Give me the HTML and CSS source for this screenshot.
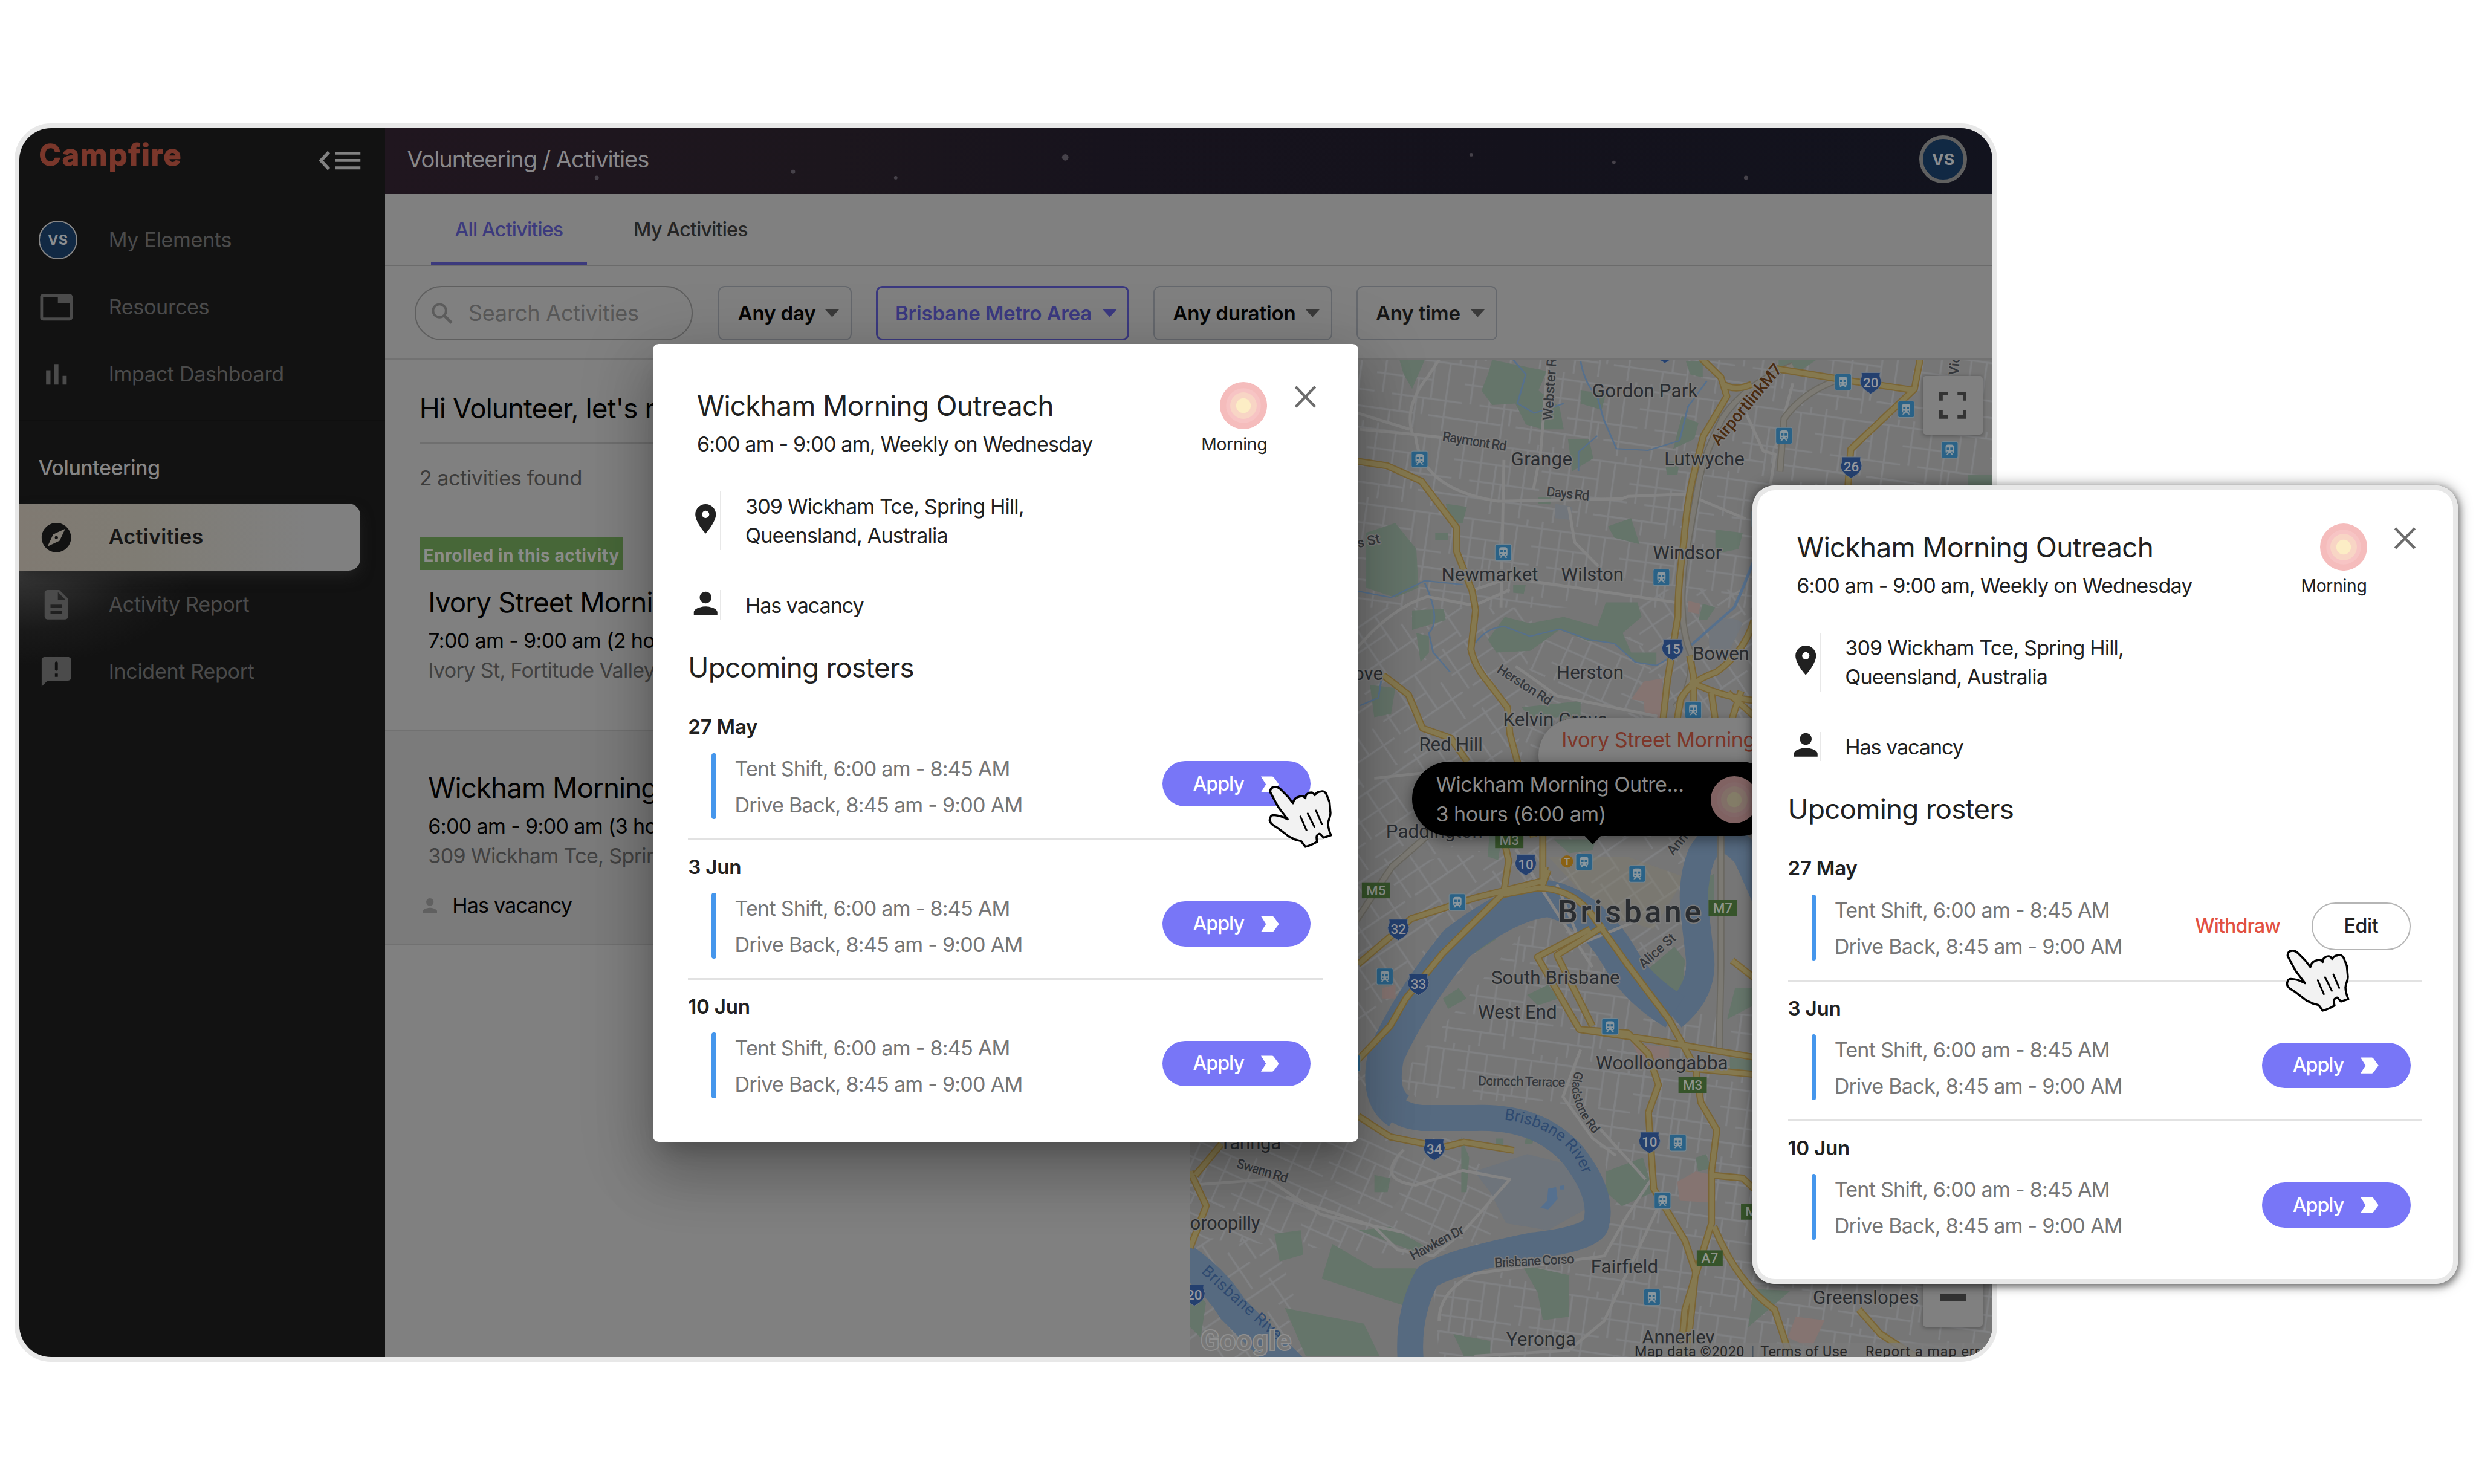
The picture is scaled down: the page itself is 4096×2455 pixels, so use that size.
FILE: index.html
```html
<!DOCTYPE html>
<html lang="en">
<head>
<meta charset="utf-8">
<title>Campfire – Volunteering</title>
<link rel="stylesheet" href="styles.css">
</head>
<body>
<svg width="0" height="0" class="defs" aria-hidden="true">
  <defs>
    <symbol id="pin" viewBox="0 0 24 24"><path d="M12 2C8.13 2 5 5.13 5 9c0 5.25 7 13 7 13s7-7.75 7-13c0-3.87-3.13-7-7-7zm0 9.5a2.5 2.5 0 1 1 0-5 2.5 2.5 0 0 1 0 5z"/></symbol>
    <symbol id="person" viewBox="0 0 24 24"><path d="M12 12c2.21 0 4-1.79 4-4s-1.79-4-4-4-4 1.79-4 4 1.79 4 4 4zm0 2c-2.67 0-8 1.34-8 4v2h16v-2c0-2.66-5.33-4-8-4z"/></symbol>
    <symbol id="sun" viewBox="0 0 80 80"><circle cx="40" cy="40" r="40" fill="#f5bcbc"/><circle cx="40" cy="40" r="29.5" fill="#f7c4c4"/><circle cx="40" cy="40" r="22.5" fill="#f8d5c5"/><circle cx="40" cy="40" r="12.5" fill="#fcedc5"/></symbol>
    <symbol id="close" viewBox="0 0 42 42"><path d="M4.500 4 37.500 38M37.500 4 4.500 38" stroke="#6c6c6c" stroke-width="4.500" fill="none"/></symbol>
    <symbol id="label" viewBox="0 0 32 28"><path d="M1 .5h18.500c1.500 0 2.500.5 3.400 1.800L31.500 14l-8.600 11.700c-.9 1.300-1.900 1.800-3.400 1.800H1L9.500 14z" fill="#fff"/></symbol>
    <symbol id="hand" viewBox="-4 -4 114 114">
      <path d="M9.600 1C4 1 1 5 1.600 10L15 35 31 56C25 53 20 50 14 49.500 8 48.500 4 48 2.500 51 0 55 0 59 2.500 62 5 66 11 68 16 72L33 85 43 90 54 93 61 102.500C68 101 76 97 81 94 80 89 79 84 82 82 85 79.500 87 80 88 83L92 87 104.400 83C102 77 99.500 70 99.600 63 100 56 104 52 103.600 45L102 27 97 14C95 9 91 7.500 87 8.700 82 9 79 11 77 15 75 11 72 9.500 68 10.700 64 12 61 15 61 20 59 17 56 15.500 52 17 46 18 41 22 40 28.600L32 18 19 5C16 2 13 1 9.600 1Z" fill="#f2f2f2" stroke="#000" stroke-width="3.600" stroke-linejoin="round"/>
      <path d="M52.600 51 63 74.500M65 46 76.500 69M79 41 89 64" stroke="#000" stroke-width="3" fill="none" stroke-linecap="round"/>
    </symbol>
  </defs>
</svg>

<div class="stage">
  <div class="app">
    <aside class="sidebar">
      <div class="brand">
        <svg class="logo" width="250" height="76" viewBox="0 0 250 76"><text x="0.500" y="43" class="logo-text" textLength="241" lengthAdjust="spacing">Campfire</text></svg>
        <svg class="burger" width="72" height="32" viewBox="0 0 72 32"><path d="M17.500 1.500 4 16l13.500 14.500" fill="none" stroke="#828282" stroke-width="5.500"/><path d="M28 1h43v5H28zM28 13.300h43v5H28zM28 26h43v5H28z" fill="#828282"/></svg>
      </div>
      <nav class="nav">
        <a class="item"><span class="avatar small">VS</span><span>My Elements</span></a>
        <a class="item"><svg class="ico" viewBox="0 0 24 24"><path d="M21 3H3c-1.100 0-2 .9-2 2v14c0 1.100.9 2 2 2h18c1.100 0 2-.9 2-2V5c0-1.100-.9-2-2-2zm0 16H3V5h10v4h8v10z"/></svg><span>Resources</span></a>
        <a class="item"><svg class="ico" viewBox="0 0 24 24"><path d="M5 9.200h3V19H5zM10.600 5h2.800v14h-2.800zM16.200 13H19v6h-2.800z"/></svg><span>Impact Dashboard</span></a>
      </nav>
      <div class="section">Volunteering</div>
      <nav class="nav glow">
        <a class="item active"><svg class="ico" viewBox="0 0 24 24"><path d="M12 10.900c-.61 0-1.100.49-1.100 1.100s.49 1.100 1.100 1.100c.61 0 1.100-.49 1.100-1.100s-.49-1.100-1.100-1.100zM12 2C6.480 2 2 6.480 2 12s4.480 10 10 10 10-4.480 10-10S17.520 2 12 2zm2.190 12.190L6 18l3.810-8.190L18 6l-3.810 8.190z"/></svg><span>Activities</span></a>
        <a class="item"><svg class="ico" viewBox="0 0 24 24"><path d="M14 2H6c-1.100 0-1.990.9-1.990 2L4 20c0 1.100.89 2 1.990 2H18c1.100 0 2-.9 2-2V8l-6-6zm2 16H8v-2h8v2zm0-4H8v-2h8v2zm-3-5V3.500L18.500 9H13z"/></svg><span>Activity Report</span></a>
        <a class="item"><svg class="ico" viewBox="0 0 24 24"><path d="M20 2H4c-1.100 0-2 .9-2 2v18l4-4h14c1.100 0 2-.9 2-2V4c0-1.100-.9-2-2-2zm-7 8.500c0 .4-.3.800-1 .8s-1-.4-1-.8V6c0-.6.400-1 1-1s1 .4 1 1zm0 2.700v2.300h-2v-2.300z" fill-rule="evenodd"/></svg><span>Incident Report</span></a>
      </nav>
    </aside>

    <main class="main">
      <header class="topbar">
        <svg class="stars" viewBox="653 217 2725 112" width="2725" height="112"><g fill="#46424a"><circle cx="1012" cy="301" r="3.500"/><circle cx="1345" cy="291" r="3.500"/><circle cx="1519" cy="301" r="3"/><circle cx="1806.500" cy="266.500" r="5.500"/><circle cx="2495" cy="262" r="3"/><circle cx="2737" cy="275" r="3"/><circle cx="2961" cy="301" r="3.500"/><circle cx="787" cy="274" r="3"/></g></svg>
        <span class="crumbs">Volunteering / Activities</span>
        <span class="avatar large">VS</span>
      </header>
      <div class="tabs"><span class="tab on">All Activities</span><span class="tab">My Activities</span></div>
      <div class="filters">
        <div class="search"><svg width="38" height="38" viewBox="0 0 38 38"><circle cx="14.500" cy="14.500" r="11" fill="none" stroke="#5c5c5c" stroke-width="4"/><path d="M22.500 22.500 35 35" stroke="#5c5c5c" stroke-width="5"/></svg><span>Search Activities</span></div>
        <div class="chip day"><span>Any day</span><i class="caret"></i></div>
        <div class="chip area"><span>Brisbane Metro Area</span><i class="caret"></i></div>
        <div class="chip duration"><span>Any duration</span><i class="caret"></i></div>
        <div class="chip time"><span>Any time</span><i class="caret"></i></div>
      </div>
      <div class="content">
        <section class="list">
          <h1 class="greeting">Hi Volunteer, let's r</h1>
          <div class="found">2 activities found</div>
          <article class="card">
            <span class="badge">Enrolled in this activity</span>
            <h2>Ivory Street Morning</h2>
            <p>7:00 am - 9:00 am (2 hours)</p>
            <p class="muted">Ivory St, Fortitude Valley</p>
          </article>
          <article class="card second">
            <h2>Wickham Morning</h2>
            <p>6:00 am - 9:00 am (3 hours)</p>
            <p class="muted">309 Wickham Tce, Spring</p>
            <div class="vacancy"><svg width="25" height="26" viewBox="4 4 16 16" preserveAspectRatio="none" fill="#606060"><use href="#person" width="24" height="24"/></svg><span>Has vacancy</span></div>
          </article>
        </section>
        <section class="map">
          <svg class="tiles" viewBox="2017 610 1361 1692" width="1361" height="1692">
            <defs>
              <pattern id="ga" width="150" height="128" patternUnits="userSpaceOnUse" patternTransform="rotate(8)"><path d="M0 12H150M0 44H96M30 76H150M0 104H70M96 104H150M14 0V76M46 12V104M72 44V128M96 12V76M122 12V128M138 0V12M30 104V128M84 76V104"/></pattern>
              <pattern id="gb" width="140" height="120" patternUnits="userSpaceOnUse" patternTransform="rotate(-34)"><path d="M0 10H140M0 46H88M20 80H140M12 0V80M50 10V120M88 10V80M118 46V120M0 110H50"/></pattern>
              <pattern id="gc" width="130" height="116" patternUnits="userSpaceOnUse" patternTransform="rotate(24)"><path d="M0 14H130M0 42H130M0 72H74M24 98H130M16 0V98M48 14V72M74 42V116M104 14V98"/></pattern>
            </defs>
            <rect x="2017" y="610" width="1361" height="1692" fill="#767676"/>
            <g class="mesh">
              <rect x="2300" y="610" width="1080" height="420" fill="url(#ga)"/>
              <path d="M2300 1030H2600L2560 1400 2300 1500Z" fill="url(#gb)"/>
              <path d="M2600 1080H2800V1420H2560Z" fill="url(#gc)"/>
              <path d="M2780 1000H3378V1400H2780Z" fill="url(#gb)"/>
              <path d="M2300 1480 2580 1430 2600 1500 2300 1860Z" fill="url(#gb)"/>
              <path d="M2560 1420H2880V1700L2640 1500Z" fill="url(#gb)"/>
              <path d="M2600 1560 2680 1560 2820 1750 2780 1880 2400 1860 2370 1830Z" fill="url(#ga)"/>
              <path d="M2780 1720H3378V2302H2440L2430 2180 2700 2130 2740 2040 2700 1900Z" fill="url(#ga)"/>
              <path d="M2017 1930H2460L2560 2020 2520 2110 2400 2130 2017 2100Z" fill="url(#gc)"/>
              <path d="M2017 2100 2160 2100 2230 2302 2017 2302Z" fill="url(#gb)"/>
            </g>
            <!-- parks and open ground, northern half -->
            <g transform="translate(2280 580) scale(.7143 .5485)">
              <g class="park">
                <path d="M350 55 480 90 460 150 510 200 520 270 470 270 430 255 405 190 350 195 325 150 340 100ZM130 55 190 55 160 145 140 100ZM50 590 120 560 170 640 175 760 120 790 50 760ZM620 805 695 805 705 850 660 900 680 960 740 960 740 1000 690 990 640 930 580 925 510 890 440 955 360 960 340 920 380 850 440 870 520 850 600 880ZM800 230 840 250 830 300 780 330ZM880 580 945 590 935 640 880 655ZM625 570 680 545 700 625 640 605ZM530 300 580 300 590 360 540 400ZM160 830 235 825 240 860 160 890ZM1030 55 1120 55 1080 90 1030 80ZM1480 410 1560 410 1560 460 1480 460ZM170 900 200 910 200 960 180 990ZM60 1060 120 1070 110 1150 70 1160ZM420 1130 560 1110 560 1160 440 1160ZM560 150 620 160 610 210 560 190ZM760 370 795 370 790 410 765 410ZM850 810 880 820 860 860 840 860ZM240 500 290 510 280 560 250 560ZM810 60 850 60 850 110 820 100ZM215 590 245 590 245 612 215 612ZM400 750 430 750 425 778 400 775ZM460 480 490 480 488 502 460 500Z"/>
              </g>
              <path d="M710 1050 755 1040 752 1165 712 1145 710 1110 680 1105ZM815 800 845 810 840 840 815 835Z" fill="#857471"/>
              <path d="M870 870Q920 840 945 870L900 990Q850 980 870 870ZM500 500 540 510 535 550 500 545Z" fill="#71767c"/>
              <g class="creek">
                <path d="M400 55 430 100 410 190 450 220 520 190M560 60Q570 130 600 170L615 240 645 330 720 335 795 305 815 200 860 120M310 930Q340 880 380 880L440 910 510 888 580 920 640 932 690 990 740 1000 780 970M30 770 110 790 190 738 280 750M190 745Q230 860 200 900L210 960 250 1020M35 1125 80 1100 90 1020M600 290 555 340 555 400"/>
                <path d="M970 680Q940 780 925 820L820 940" stroke-width="7"/>
              </g>
            </g>
            <!-- parks and open ground, southern half -->
            <g transform="translate(2000 1400) scale(.8929 .5867)">
              <path d="M560 1000 660 950 740 980 780 1050 770 1110 700 1170 620 1150 590 1060Z" fill="#6e747b"/>
              <path d="M700 1050 715 1045 718 1080 700 1110 685 1105 698 1085ZM722 1042 730 1040 730 1052 722 1052Z" fill="#55708f"/>
              <g class="park"><path d="M290 1210 370 1280 450 1280 430 1390 330 1340 270 1310ZM180 1180 230 1170 235 1240 190 1260ZM200 1395 350 1440 380 1535 240 1535ZM870 440 940 350 960 390 955 470 925 520 890 460ZM500 500 530 470 545 500 510 530ZM810 1000 880 960 900 1060 840 1100 810 1060ZM650 1270 740 1300 740 1420 690 1430 680 1350ZM590 0 615 0 605 100 585 90ZM710 40 790 40 785 70 740 80ZM1090 1340 1160 1345 1080 1450ZM1045 670 1090 680 1090 720 1045 715ZM1055 470 1090 470 1090 520 1040 560ZM620 860 680 870 680 900 640 890ZM600 905 615 905 615 935 600 935ZM660 890 675 890 670 920 655 920ZM370 1010 400 1020 395 1060 370 1060ZM535 900 550 960 545 1060 535 1060ZM20 1330 50 1380 40 1480 20 1450ZM540 360 590 300 600 330 560 370ZM660 490 700 460 720 500 680 520ZM980 960 1000 950 1010 990 985 1000ZM340 1170 400 1160 470 1220 460 1240ZM520 1470 590 1490 590 1535 540 1535ZM1000 150 1015 140 1015 250 1000 250ZM380 760 400 760 420 820 385 800Z"/></g>
              <path d="M945 1030 980 1000 1015 1010 1015 1090 950 1085ZM1170 1420 1225 1430 1200 1510 1155 1480ZM385 470 410 460 410 500 385 500ZM860 630 930 640 930 680 880 690Z" fill="#857471"/>
              <path d="M700 90 850 90 960 150 900 300 830 270 780 220Z" fill="#807c6c" opacity=".45"/>
            </g>
            <!-- the river narrows as it winds south -->
            <g class="river">
              <path stroke-width="48" d="M3010 1560Q2985 1500 2962 1450 2915 1395 2885 1450 2866 1500 2875 1560L2882 1620Q2890 1680 2836 1724"/>
              <path stroke-width="62" d="M2840 1716Q2780 1680 2750 1630 2700 1540 2625 1524 2560 1530 2470 1600 2390 1700 2350 1790 2335 1860 2372 1884"/>
              <path stroke-width="44" d="M2355 1868Q2370 1892 2410 1896L2500 1896Q2610 1892 2668 1960 2722 2030 2705 2080 2690 2102 2600 2112 2460 2140 2420 2165 2385 2230 2392 2310"/>
            </g>
            <path d="M2000 2130Q2060 2170 2090 2220L2190 2320" fill="none" stroke="#566a80" stroke-width="52"/>
            <!-- local collector roads -->
            <g class="collector">
              <path d="M2305 728 2390 736 2540 752M2395 736Q2380 690 2420 640L2440 610M2625 610 2612 770 2600 830M2300 700 2390 728M2400 740Q2410 830 2540 850L2750 846 2760 842 2860 838 2960 880M2500 1000 2560 980 2850 1023M2300 1100Q2360 1030 2420 1012L2500 1027 2560 1000M2550 780 2545 1030M2570 1130 2640 1180 2810 1215M2330 1320 2420 1310 2460 1290M2660 860 2670 920 2710 960M2960 700 2990 765 3010 770 2990 900M3040 650 3010 760"/>
              <path d="M2380 1950Q2330 2000 2400 2010L2480 1985 2560 2000 2480 2090 2430 2130 2370 2120 2330 2080 2180 2030M2017 2010 2150 2000 2240 2060 2380 2090M2440 2240Q2440 2190 2500 2160L2720 2130 2760 2060 2800 2000M2780 1560 2680 1600 2640 1500M2570 1440 2700 1640M2680 1780 2650 1860 2700 1930 2740 1960M2500 2300 2660 2290 2720 2240 2820 2030M2700 1900 2790 2000"/>
            </g>
            <!-- motorway tunnels -->
            <g class="tunnel">
              <path id="tun" class="edge" d="M3040 620Q2960 650 2920 710 2885 780 2878 830L2855 960Q2845 1060 2868 1110 2870 1170 2840 1200M2918 1400V1640L2915 1780M3130 640Q3060 660 3025 710L3018 800M2300 1560 2360 1470 2440 1400"/>
              <path d="M3040 620Q2960 650 2920 710 2885 780 2878 830L2855 960Q2845 1060 2868 1110 2870 1170 2840 1200M2918 1400V1640L2915 1780M3130 640Q3060 660 3025 710L3018 800M2300 1560 2360 1470 2440 1400"/>
            </g>
            <!-- arterial roads: casing, then fill -->
            <defs><g id="art">
              <path d="M2300 782 2352 790 2410 816 2470 895V936L2496 1002 2502 1035 2494 1101Q2500 1130 2524 1158L2556 1200 2560 1244 2575 1300 2600 1420M2345 1145 2388 1178 2412 1235 2460 1252 2488 1292M2885 608 2918 640 2928 672 2888 740 2873 800Q2860 850 2855 920 2845 990 2845 1046L2827 1156 2820 1219M3010 625 3138 646 3246 662M3256 608 3246 660 3138 762 3133 830M2920 650Q2940 665 2970 652M2865 1112 2872 1150V1190M2974 1052Q2958 1106 2910 1140 2866 1155 2850 1185L2844 1219M2865 1156Q2920 1182 2974 1188M2952 1172 2937 1219M2902 1175 2908 1219M2930 1175 2975 1215"/>
              <path d="M2545 1400 2558 1460 2550 1512M2616 1400V1500L2625 1476M2303 1635 2393 1558 2500 1523 2616 1494 2620 1470M2549 1517 2607 1506Q2661 1506 2696 1547L2759 1635 2830 1729 2875 1811 2884 1870 2911 1916 2902 1987V2075L2857 2221 2850 2302M2553 1511 2446 1617 2384 1693 2357 1740 2300 1800M2696 1576 2607 1623 2678 1746 2804 1764 2974 1793M2720 1570 2640 1620 2700 1740M2678 1746 2760 1752 2795 1787 2812 1840 2795 1887 2804 2016 2857 2104 2875 2157 2860 2302M2937 1629 2974 1658M2857 1811 2974 1822M2303 1893 2357 1928 2446 1946 2482 1937 2567 1951M2902 1993 2955 1998 2974 2016M2906 2080Q2945 2175 3009 2221L3036 2302M3152 2221 3188 2262 3250 2302M2018 1987 2045 2045 2018 2116M2071 1940 2027 1993"/>
            </g></defs>
            <use href="#art" class="art-edge"/>
            <use href="#art" class="art"/>

            <!-- suburb names -->
            <g class="names">
              <text x="2789" y="674" textLength="179">Gordon Park</text>
              <text x="2614" y="789" textLength="104">Grange</text>
              <text x="2890" y="789" textLength="136">Lutwyche</text>
              <text x="2861" y="948" textLength="117">Windsor</text>
              <text x="2526" y="985" textLength="164">Newmarket</text>
              <text x="2700" y="985" textLength="106">Wilston</text>
              <text x="2696" y="1151.500" textLength="114">Herston</text>
              <text x="2918" y="1120" textLength="96">Bowen</text>
              <text x="2637" y="1231" textLength="177">Kelvin Grove</text>
              <text x="2460" y="1273" textLength="108">Red Hill</text>
              <text x="2432" y="1421" textLength="164">Paddington</text>
              <text x="2320" y="1153">ove</text>
              <text x="2637.500" y="1669" textLength="218">South Brisbane</text>
              <text x="2573" y="1727" textLength="134">West End</text>
              <text x="2818" y="1814" textLength="224">Woolloongabba</text>
              <text x="2120" y="1949" textLength="104">Taringa</text>
              <text x="2077" y="2085" textLength="119">oroopilly</text>
              <text x="2754.500" y="2158.600" textLength="114">Fairfield</text>
              <text x="3164" y="2211" textLength="180">Greenslopes</text>
              <text x="2613" y="2282" textLength="118">Yeronga</text>
              <text x="2845.600" y="2279" textLength="123">Annerley</text>
              <text class="city" x="2763" y="1564" textLength="243">Brisbane</text>
            </g>
            <g class="streets">
              <text transform="translate(2636 654) rotate(-86)">Webster Rd</text>
              <text transform="translate(2499 756) rotate(9)" textLength="110">Raymont Rd</text>
              <text transform="translate(2658 845) rotate(6)" textLength="73">Days Rd</text>
              <text transform="translate(2581 1168) rotate(33)" textLength="106">Herston Rd</text>
              <text transform="translate(2322 925) rotate(-12)">s St</text>
              <text transform="translate(3322 620) rotate(-85)">Vid</text>
              <text transform="translate(2580 1842) rotate(1)" textLength="148">Dornoch Terrace</text>
              <text transform="translate(2138 1993) rotate(17)" textLength="90">Swann Rd</text>
              <text transform="translate(2440 2114) rotate(-28)" textLength="100">Hawken Dr</text>
              <text transform="translate(2602 2146) rotate(-3)" textLength="136">Brisbane Corso</text>
              <text transform="translate(2815 1618) rotate(-42)" textLength="76">Alice St</text>
              <text transform="translate(2850 1436) rotate(-50)">Ann</text>
              <path id="glad" d="M2671 1816Q2652 1866 2704 1925" fill="none" stroke="none"/>
              <text class="along"><textPath href="#glad" textLength="118">Gladstone Rd</textPath></text>
            </g>
            <text class="tunnel-name" transform="translate(2914 757) rotate(-50)" textLength="170">AirportlinkM7</text>
            <path id="rv" d="M2550 1899Q2656 1912 2684 1992" fill="none"/>
            <text class="water"><textPath href="#rv">Brisbane River</textPath></text>
            <text class="water" transform="translate(2036 2158) rotate(42)" textLength="182">Brisbane River</text>

            <!-- route shields -->
            <g class="shields">
              <g transform="translate(2836 1101)"><path d="M-16-17H16Q14-11 18-3 19 9 0 19-19 9-18-3-14-11-16-17Z"/><text y="8">15</text></g>
              <g transform="translate(3172 649)"><path d="M-16-17H16Q14-11 18-3 19 9 0 19-19 9-18-3-14-11-16-17Z"/><text y="8">20</text></g>
              <g transform="translate(3139 792)"><path d="M-16-17H16Q14-11 18-3 19 9 0 19-19 9-18-3-14-11-16-17Z"/><text y="8">26</text></g>
              <g transform="translate(2587 1466)"><path d="M-16-17H16Q14-11 18-3 19 9 0 19-19 9-18-3-14-11-16-17Z"/><text y="8">10</text></g>
              <g transform="translate(2371 1576)"><path d="M-16-17H16Q14-11 18-3 19 9 0 19-19 9-18-3-14-11-16-17Z"/><text y="8">32</text></g>
              <g transform="translate(2405 1669)"><path d="M-16-17H16Q14-11 18-3 19 9 0 19-19 9-18-3-14-11-16-17Z"/><text y="8">33</text></g>
              <g transform="translate(2432 1949)"><path d="M-16-17H16Q14-11 18-3 19 9 0 19-19 9-18-3-14-11-16-17Z"/><text y="8">34</text></g>
              <g transform="translate(2797 1937)"><path d="M-16-17H16Q14-11 18-3 19 9 0 19-19 9-18-3-14-11-16-17Z"/><text y="8">10</text></g>
              <g transform="translate(2025 2196)"><path d="M-16-17H16Q14-11 18-3 19 9 0 19-19 9-18-3-14-11-16-17Z"/><text y="8">20</text></g>
              <g transform="translate(2823 597)"><path d="M-16-17H16Q14-11 18-3 19 9 0 19-19 9-18-3-14-11-16-17Z"/></g>
            </g>
            <g class="motorways">
              <g transform="translate(2559 1425)"><rect x="-24" y="-13.500" width="48" height="27"/><text y="8">M3</text></g>
              <g transform="translate(2333 1510)"><rect x="-24" y="-13.500" width="48" height="27"/><text y="8">M5</text></g>
              <g transform="translate(2921 1540)"><rect x="-24" y="-13.500" width="48" height="27"/><text y="8">M7</text></g>
              <g transform="translate(2870 1840)"><rect x="-24" y="-13.500" width="48" height="27"/><text y="8">M3</text></g>
              <g transform="translate(2899 2134)"><rect x="-22" y="-13.500" width="44" height="27"/><text y="8">A7</text></g>
              <g transform="translate(2976 2055)"><rect x="-24" y="-13.500" width="48" height="27"/><text y="8">M3</text></g>
            </g>
            <defs><g id="train"><rect x="-14" y="-14" width="28" height="28" rx="3" fill="#2a6287" stroke="#75858e" stroke-width="1.200"/><path d="M-7-5q0-4 4-4h6q4 0 4 4v8q0 3-3 3l2.500 3h-3l-2-3h-3l-2 3h-3l2.500-3q-3 0-3-3z" fill="#8a979e"/><path d="M-5-4h4v4h-4zM1-4h4v4h-4zM-5 2.500h2.500v2h-2.500zM2.500 2.500h2.500v2h-2.500z" fill="#2a6287"/></g></defs>
            <use href="#train" x="2407" y="779"/><use href="#train" x="2549" y="937"/><use href="#train" x="2817" y="979"/><use href="#train" x="3125" y="648"/><use href="#train" x="3232" y="694"/><use href="#train" x="3025" y="739"/><use href="#train" x="3306" y="763"/><use href="#train" x="2871" y="1204"/><use href="#train" x="2686" y="1462"/><use href="#train" x="2776" y="1482"/><use href="#train" x="2471" y="1530"/><use href="#train" x="2348" y="1656"/><use href="#train" x="2730" y="1741"/><use href="#train" x="2845" y="1938"/><use href="#train" x="2819" y="2036"/><use href="#train" x="2801" y="2200"/><use href="#train" x="2984" y="880"/><use href="#train" x="2292" y="1803"/>
            <circle cx="2657" cy="1461" r="10.500" fill="#8a6114"/><text x="2657" y="1467" class="transit">T</text>
            <text x="2036" y="2289" class="google" textLength="153">Google</text>
            <rect x="2764" y="2278" width="614" height="24" fill="#7b7b7b" opacity=".8"/>
            <g class="legal"><text x="2771.500" y="2301" textLength="186">Map data ©2020</text><path d="M2972 2282V2302" stroke="#4a5560" stroke-width="2"/><text x="2985" y="2301" textLength="147">Terms of Use</text><text x="3163" y="2301" textLength="217">Report a map error</text></g>
          </svg>
          <div class="mapbtn full"><svg width="46" height="46" viewBox="0 0 46 46" fill="none" stroke="#333" stroke-width="6"><path d="M3 15V3H15M31 3H43V15M43 31V43H31M15 43H3V31"/></svg></div>
          <div class="mapbtn minus"><i></i></div>
          <div class="callout white">Ivory Street Morning</div>
          <div class="callout black">
            <div><div>Wickham Morning Outre...</div><div>3 hours (6:00 am)</div></div>
            <svg class="dim" width="80" height="80"><use href="#sun"/></svg>
          </div>
        </section>
      </div>
    </main>
  </div>

  <section class="modal one">
    <header class="head">
      <div class="titles"><h2>Wickham Morning Outreach</h2><p>6:00 am - 9:00 am, Weekly on Wednesday</p></div>
      <div class="when"><svg width="80" height="80"><use href="#sun"/></svg><span>Morning</span></div>
      <svg class="x" width="42" height="42"><use href="#close"/></svg>
    </header>
    <div class="fact where"><span class="mark"><svg width="60" height="60"><use href="#pin"/></svg></span><p>309 Wickham Tce, Spring Hill,<br>Queensland, Australia</p></div>
    <div class="fact room"><span class="mark"><svg width="60" height="60"><use href="#person"/></svg></span><p>Has vacancy</p></div>
    <h3>Upcoming rosters</h3>
    <div class="roster"><h4>27 May</h4><div class="shift"><div class="lines"><div>Tent Shift, 6:00 am - 8:45 AM</div><div>Drive Back, 8:45 am - 9:00 AM</div></div><button class="apply">Apply<svg width="32" height="28"><use href="#label"/></svg></button></div></div>
    <div class="roster"><h4>3 Jun</h4><div class="shift"><div class="lines"><div>Tent Shift, 6:00 am - 8:45 AM</div><div>Drive Back, 8:45 am - 9:00 AM</div></div><button class="apply">Apply<svg width="32" height="28"><use href="#label"/></svg></button></div></div>
    <div class="roster"><h4>10 Jun</h4><div class="shift"><div class="lines"><div>Tent Shift, 6:00 am - 8:45 AM</div><div>Drive Back, 8:45 am - 9:00 AM</div></div><button class="apply">Apply<svg width="32" height="28"><use href="#label"/></svg></button></div></div>
    <svg class="cursor" width="114" height="114"><use href="#hand"/></svg>
  </section>

  <section class="modal two">
    <header class="head">
      <div class="titles"><h2>Wickham Morning Outreach</h2><p>6:00 am - 9:00 am, Weekly on Wednesday</p></div>
      <div class="when"><svg width="80" height="80"><use href="#sun"/></svg><span>Morning</span></div>
      <svg class="x" width="42" height="42"><use href="#close"/></svg>
    </header>
    <div class="fact where"><span class="mark"><svg width="60" height="60"><use href="#pin"/></svg></span><p>309 Wickham Tce, Spring Hill,<br>Queensland, Australia</p></div>
    <div class="fact room"><span class="mark"><svg width="60" height="60"><use href="#person"/></svg></span><p>Has vacancy</p></div>
    <h3>Upcoming rosters</h3>
    <div class="roster"><h4>27 May</h4><div class="shift"><div class="lines"><div>Tent Shift, 6:00 am - 8:45 AM</div><div>Drive Back, 8:45 am - 9:00 AM</div></div><button class="withdraw">Withdraw</button><button class="edit">Edit</button></div></div>
    <div class="roster"><h4>3 Jun</h4><div class="shift"><div class="lines"><div>Tent Shift, 6:00 am - 8:45 AM</div><div>Drive Back, 8:45 am - 9:00 AM</div></div><button class="apply">Apply<svg width="32" height="28"><use href="#label"/></svg></button></div></div>
    <div class="roster"><h4>10 Jun</h4><div class="shift"><div class="lines"><div>Tent Shift, 6:00 am - 8:45 AM</div><div>Drive Back, 8:45 am - 9:00 AM</div></div><button class="apply">Apply<svg width="32" height="28"><use href="#label"/></svg></button></div></div>
    <svg class="cursor" width="114" height="114"><use href="#hand"/></svg>
  </section>
</div>
</body>
</html>
```
FILE: styles.css
```css
* { box-sizing: border-box; margin: 0; padding: 0; }
body { background: #fff; overflow: hidden; font-family: Inter, "Liberation Sans", sans-serif; }
h1, h2, h3 { font-weight: 400; }
button { font: inherit; border: 0; background: none; }
.defs { position: absolute; }

.stage { position: relative; width: 4199px; height: 2517px; zoom: 0.97547; overflow: hidden; padding: 209px 0 0 25px; font-size: 35px; letter-spacing: -0.8px; line-height: 50px; }

/* application frame */
.app { display: grid; grid-template-columns: 620px 2725px; width: 3362px; height: 2101px; border: 8.25px solid #e8e8e8; border-radius: 62px; overflow: hidden; background: #e8e8e8; }

.sidebar { background: #121212; color: #4b4b4b; display: flex; flex-direction: column; }
.brand { height: 133px; display: flex; align-items: flex-start; justify-content: space-between; padding: 21px 41px 0 32px; }
.logo-text { font: 700 50px Inter, sans-serif; fill: #7a372b; stroke: #7a372b; stroke-width: 1.5; stroke-linejoin: round; letter-spacing: 0; }
.burger { margin-top: 18px; }
.nav { display: flex; flex-direction: column; }
.item { height: 114px; display: flex; align-items: center; gap: 59px; padding-left: 32px; letter-spacing: -0.35px; }
.ico { width: 60px; height: 60px; fill: #4b4b4b; }
.avatar { display: flex; align-items: center; justify-content: center; border-radius: 50%; background: #112944; color: #8a8d90; font-weight: 700; }
.avatar.small { width: 66px; height: 66px; border: 2.1px solid #868686; margin-right: -6px; font-size: 24px; letter-spacing: 0.5px; }
.avatar.large { width: 81px; height: 81px; border: 6.2px solid #606060; margin-right: 42px; margin-top: -7px; font-size: 27px; letter-spacing: 0.5px; }
.section { margin-top: 20px; border-top: 2.1px solid #0f0f0f; height: 142px; display: flex; align-items: center; padding: 19px 0 0 32px; color: #868686; font-weight: 500; letter-spacing: -0.6px; }
.glow { background: radial-gradient(ellipse 300px 170px at 0 105px, #3a3a3a 0, #282828 35%, #191919 65%, #121212 100%); }
.active { width: 578px; border-radius: 0 20px 20px 0; background: linear-gradient(90deg, #807a72, #7f7c74 35%, #808080 85%); color: #161616; font-weight: 600; letter-spacing: 0.3px; box-shadow: 0 12px 26px -6px #262626; }
.active .ico { fill: #121212; }

.main { display: flex; flex-direction: column; background: #808080; overflow: hidden; }
.topbar { position: relative; height: 112px; flex: none; display: flex; align-items: center; justify-content: space-between; padding-left: 37px; background: linear-gradient(90deg, #20161f, #1c161d 28%, #17131d 45%, #14121c 70%, #12131e); }
.stars { position: absolute; inset: 0; }
.crumbs { position: relative; font-size: 39px; letter-spacing: -1.1px; color: #88878a; margin-top: -6px; }
.tabs { height: 122px; flex: none; display: flex; gap: 44px; padding-left: 78px; border-bottom: 2.1px solid #6b6b6b; }
.tab { width: 264px; height: 120px; display: flex; align-items: center; justify-content: center; padding-top: 2px; font-size: 33px; font-weight: 500; color: #252525; }
.tab.on { color: #3c3a7d; border-bottom: 5.2px solid #3c3a7d; padding-top: 7px; }
.filters { height: 159px; flex: none; display: flex; padding: 34px 0 0 50px; border-bottom: 2.1px solid #727272; }
.search { width: 472px; height: 92px; border: 2.1px solid #5f5f5f; border-radius: 46px; display: flex; align-items: center; padding-left: 26px; gap: 25px; font-size: 37px; letter-spacing: -0.2px; color: #575757; margin-right: 43px; }
.chip { height: 92px; border: 2.1px solid #65686d; border-radius: 11px; display: flex; align-items: center; justify-content: space-between; padding: 0 19px 0 31px; margin-right: 41px; font-weight: 600; font-size: 34px; letter-spacing: -0.2px; color: #050505; }
.chip.day { width: 226px; }
.chip.area { width: 430px; border: 3.1px solid #3b3980; padding: 0 18px 0 30px; color: #3b3980; }
.chip.duration { width: 303px; }
.chip.time { width: 239px; color: #161616; }
.caret { width: 24px; height: 13px; background: #3a3a3a; clip-path: polygon(0 0, 100% 0, 50% 100%); }
.area .caret { background: #3b3980; }

.content { display: grid; grid-template-columns: 1364px 1361px; height: 1692px; }
.list { overflow: hidden; color: #020202; white-space: nowrap; }
.greeting { margin-left: 58px; height: 142px; padding-top: 53px; border-bottom: 2.1px solid #6f6f6f; font-size: 47px; line-height: 60px; letter-spacing: -1px; }
.found { margin-left: 58px; padding-top: 34px; color: #3c3c3c; letter-spacing: -0.4px; }
.card { padding: 74px 0 75px 73px; border-bottom: 2.1px solid #717171; }
.card h2 { font-size: 47px; line-height: 60px; letter-spacing: -1px; margin: 25px 0 10px; }
.card p { letter-spacing: -0.7px; }
.muted { color: #414141; }
.badge { display: flex; align-items: center; justify-content: center; width: 346px; height: 57px; margin-left: -15px; padding-top: 8px; background: #476738; color: #8b8c89; font-weight: 700; font-size: 29px; letter-spacing: 0.45px; }
.second { background: #7b7b7b; padding: 67px 0 39px 73px; }
.second h2 { margin-top: 1px; }
.vacancy { margin: 34px 0 0 -10px; display: flex; align-items: center; gap: 26px; letter-spacing: -0.9px; }

/* map canvas */
.map { position: relative; overflow: hidden; background: #767676; }
.tiles { display: block; letter-spacing: 0; }
.mesh { stroke: none; }
pattern path { stroke: #808183; stroke-width: 3.2; fill: none; }
.park { fill: #65756a; }
.creek { fill: none; stroke: #56708d; stroke-width: 4; }
.river { fill: none; stroke: #566a80; stroke-linejoin: round; }
.collector { fill: none; stroke: #848484; stroke-width: 5; stroke-linejoin: round; }
.tunnel { fill: none; stroke: #7c7a74; stroke-width: 8; }
.tunnel .edge { stroke: #6b6962; stroke-width: 12; }
.art-edge { fill: none; stroke: #7b6534; stroke-width: 12; stroke-linejoin: round; }
.art { fill: none; stroke: #857950; stroke-width: 8; stroke-linejoin: round; }
.names text { font: 400 32px Roboto, sans-serif; text-anchor: middle; fill: #2a2d31; paint-order: stroke; stroke: #7c7c7c; stroke-width: 4; stroke-linejoin: round; }
.names .city { font-size: 53px; font-weight: 500; }
.streets text { font: 500 23px Roboto, sans-serif; text-anchor: middle; fill: #35383c; paint-order: stroke; stroke: #7c7c7c; stroke-width: 4; stroke-linejoin: round; }
.streets .along { text-anchor: start; font-size: 21px; }
.tunnel-name { font: 500 28px Roboto, sans-serif; fill: #4a2b10; text-anchor: start; paint-order: stroke; stroke: #7c7c7c; stroke-width: 4; }
.water { font: 400 27px Roboto, sans-serif; fill: #2f4a70; }
.shields path { fill: #24406f; stroke: #6f7987; stroke-width: 1; }
.shields text { font: 500 23px Roboto, sans-serif; fill: #95989e; text-anchor: middle; }
.motorways rect { fill: #36542a; }
.motorways text { font: 500 23px Roboto, sans-serif; fill: #8f958c; text-anchor: middle; }
.transit { font: 700 16px Roboto, sans-serif; fill: #9a958a; text-anchor: middle; }
.google { font: 500 46px Roboto, sans-serif; fill: #787878; stroke: #909090; stroke-width: 4; paint-order: stroke; }
.legal text { font: 400 24px Roboto, sans-serif; fill: #262626; }

.mapbtn { position: absolute; left: 1244px; width: 101px; height: 100px; background: #808080; border-radius: 5px; box-shadow: 0 2px 8px rgba(0, 0, 0, .3); display: flex; align-items: center; justify-content: center; }
.mapbtn.full { top: 27px; }
.mapbtn.minus { top: 1540px; }
.mapbtn i { width: 44px; height: 12px; background: #333; }
.callout { position: absolute; display: flex; align-items: center; letter-spacing: -0.5px; }
.callout.white { left: 592px; top: 608px; width: 640px; height: 126px; border-radius: 63px; padding: 0 0 51px 39px; background: #808080; color: #7d3629; box-shadow: 0 4px 16px rgba(0, 0, 0, .35); }
.callout.black { left: 378px; top: 682px; width: 620px; height: 126px; border-radius: 63px; padding: 2px 0 0 40px; gap: 46px; background: #000; color: #8a8a8a; letter-spacing: -0.5px; box-shadow: 0 6px 24px rgba(0, 0, 0, .45); }
.callout.black::after { content: ""; position: absolute; left: 292px; top: 125px; width: 28px; height: 15px; background: #000; clip-path: polygon(0 0, 100% 0, 50% 100%); }
.dim { opacity: .52; }

/* activity dialogs */
.modal { position: absolute; width: 1196px; height: 1354px; padding: 65px 60px 0; background: #fff; color: #212121; fill: #212121; letter-spacing: -0.88px; }
.modal.one { left: 1107px; top: 583px; border-radius: 10px; box-shadow: 0 27px 37px -17px rgba(0, 0, 0, .22), 0 60px 95px 7px rgba(0, 0, 0, .16), 0 22px 115px 20px rgba(0, 0, 0, .14); }
.modal.two { left: 2972px; top: 823px; border-radius: 38px; box-shadow: inset 0 0 0 8.25px #e8e8e8, 3px 5px 12px rgba(0, 0, 0, .4), 0 0 24px rgba(0, 0, 0, .4); }
.head { height: 131px; display: flex; align-items: flex-start; padding: 0 8px 0 15px; }
.titles { flex: 1; padding-top: 11px; white-space: nowrap; }
.titles h2 { font-size: 47px; line-height: 60px; letter-spacing: -0.7px; margin-bottom: 10px; }
.when { width: 112px; display: flex; flex-direction: column; align-items: flex-end; font-size: 29px; line-height: 40px; letter-spacing: -0.3px; gap: 6px; margin-right: 44px; }
.x { margin-top: 4px; }
.fact { display: flex; }
.where { height: 100px; margin-top: 54px; }
.room { height: 50px; margin-top: 68px; }
.mark { width: 56px; border-right: 2.1px solid #e8e8e8; display: flex; align-items: center; }
.mark svg { flex: none; margin: -6px 0 0 0; }
.fact p { margin: 1px 0 0 41px; }
.room p { letter-spacing: -1.1px; margin-top: 2px; }
.modal h3 { font-size: 47px; line-height: 60px; letter-spacing: -0.8px; margin: 52px 0 25px; }
.roster { padding: 20px 0 33px; border-bottom: 3.1px solid #e2e2e2; }
.roster:nth-last-of-type(1) { border: 0; }
.roster h4 { font-weight: 600; font-size: 34px; letter-spacing: -0.3px; margin-bottom: 19px; }
.shift { height: 112px; display: flex; align-items: center; padding: 0 20px 0 40px; }
.shift::before { content: ""; width: 8px; height: 112px; border-radius: 4px; background: #4596ec; }
.lines { flex: 1; margin: 3px 0 0 31px; line-height: 61.5px; letter-spacing: -0.8px; color: #767676; white-space: nowrap; }
.apply { width: 252px; height: 77px; margin-top: -7px; border-radius: 39px; background: #7876f7; color: #fff; font-size: 33px; font-weight: 500; letter-spacing: -1px; display: flex; align-items: center; justify-content: space-between; padding: 1px 54px 0 52px; }
.withdraw { font-size: 33px; font-weight: 500; letter-spacing: -0.9px; color: #e25141; margin: -4px 53px 0 0; }
.edit { width: 168px; height: 81px; margin-top: -4px; border: 2.1px solid #b5b5b5; border-radius: 41px; font-size: 33px; font-weight: 500; letter-spacing: -0.4px; color: #212121; }
.cursor { position: absolute; }
.one .cursor { left: 1042px; top: 747px; }
.two .cursor { left: 902px; top: 784px; }
```
